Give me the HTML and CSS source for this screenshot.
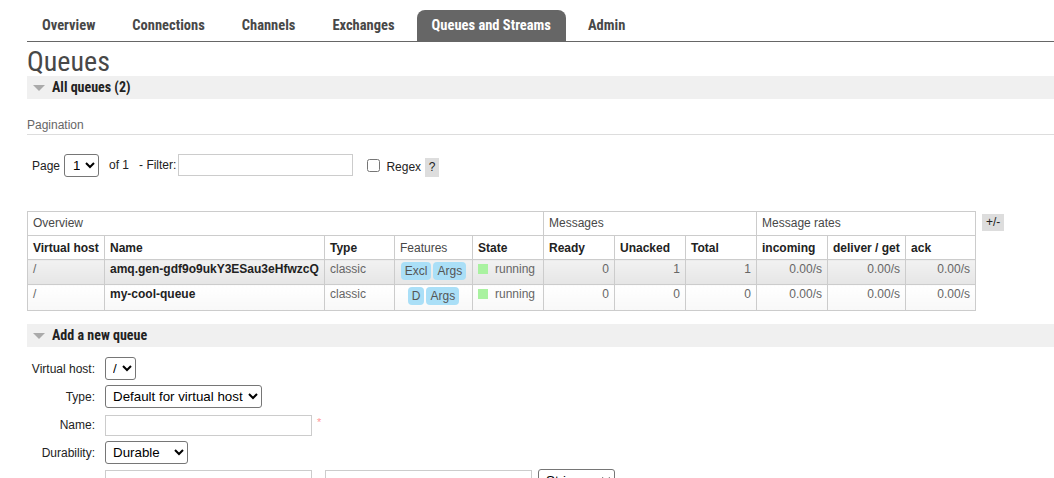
FILE: index.html
```html
<!DOCTYPE html>
<html>
<head>
<meta charset="utf-8">
<link rel="stylesheet" href="styles.css">
</head>
<body>
<div class="page">
  <ul class="tabs">
    <li class="tab">Overview</li>
    <li class="tab">Connections</li>
    <li class="tab">Channels</li>
    <li class="tab">Exchanges</li>
    <li class="tab active">Queues and Streams</li>
    <li class="tab">Admin</li>
  </ul>
  <h1 class="title">Queues</h1>
  <div class="bar"><span class="tri"></span>All queues (2)</div>

  <div class="pag-head">Pagination</div>
  <div class="pag-row">
    <span>Page</span>
    <select class="sel sel-page"><option>1</option></select>
    <span class="of">of 1</span>
    <span class="flt">- Filter:</span>
    <input class="txt filter" type="text">
    <input class="chk" type="checkbox">
    <span class="regex">Regex</span>
    <span class="help">?</span>
  </div>

  <div class="table-wrap">
    <table class="list">
      <colgroup>
        <col style="width:77px"><col style="width:220px"><col style="width:70px"><col style="width:78px"><col style="width:71px">
        <col style="width:71px"><col style="width:71px"><col style="width:71px">
        <col style="width:71px"><col style="width:78px"><col style="width:70px">
      </colgroup>
      <thead>
        <tr class="grp">
          <th colspan="5">Overview</th>
          <th colspan="3">Messages</th>
          <th colspan="3">Message rates</th>
        </tr>
        <tr class="hdr">
          <th>Virtual host</th><th>Name</th><th>Type</th><th class="plain">Features</th><th>State</th>
          <th>Ready</th><th>Unacked</th><th>Total</th>
          <th>incoming</th><th>deliver / get</th><th>ack</th>
        </tr>
      </thead>
      <tbody>
        <tr class="alt1">
          <td>/</td><td class="name">amq.gen-gdf9o9ukY3ESau3eHfwzcQ</td><td>classic</td>
          <td class="feat"><span class="badge">Excl</span><span class="badge">Args</span></td>
          <td><span class="green"></span>running</td>
          <td class="num">0</td><td class="num">1</td><td class="num">1</td>
          <td class="num">0.00/s</td><td class="num">0.00/s</td><td class="num">0.00/s</td>
        </tr>
        <tr class="alt2">
          <td>/</td><td class="name">my-cool-queue</td><td>classic</td>
          <td class="feat"><span class="badge">D</span><span class="badge">Args</span></td>
          <td><span class="green"></span>running</td>
          <td class="num">0</td><td class="num">0</td><td class="num">0</td>
          <td class="num">0.00/s</td><td class="num">0.00/s</td><td class="num">0.00/s</td>
        </tr>
      </tbody>
    </table>
    <span class="pm">+/-</span>
  </div>

  <div class="bar bar2"><span class="tri"></span>Add a new queue</div>

  <div class="form">
    <label>Virtual host:</label>
    <div><select class="sel sel-vh"><option>/</option></select></div>
    <label>Type:</label>
    <div><select class="sel sel-type"><option>Default for virtual host</option></select></div>
    <label>Name:</label>
    <div class="inl"><input class="txt w207" type="text"><span class="req">*</span></div>
    <label>Durability:</label>
    <div><select class="sel sel-dur"><option>Durable</option><option>Transient</option></select></div>
    <label></label>
    <div class="inl"><input class="txt w207" type="text"><span class="eq">=</span><input class="txt w207" type="text"><select class="sel sel-str"><option>String</option></select></div>
  </div>
</div>
</body>
</html>
```

FILE: styles.css
```css
html, body {
  margin: 0;
  padding: 0;
  background: #fff;
}
body {
  font-family: "Liberation Sans", Arial, sans-serif;
  font-size: 12px;
  color: #484848;
  overflow: hidden;
}
.page {
  margin-left: 27px;
}
.tabs {
  list-style: none;
  margin: 10px 0 0 0;
  padding: 0;
  display: flex;
  gap: 7px;
  border-bottom: 1px solid #666;
  height: 31px;
}
.tab {
  font-family: "Roboto Condensed", "Liberation Sans", sans-serif;
  font-weight: bold;
  font-size: 14.5px;
  line-height: 31px;
  padding: 0 15px;
  color: #484848;
  border-radius: 8px 8px 0 0;
}
.tab.active {
  background: #666;
  color: #fff;
}
.title {
  font-family: "Roboto Condensed", "Liberation Sans", sans-serif;
  font-weight: normal;
  font-size: 28px;
  line-height: 28px;
  margin: 6px 0 0 0;
  color: #484848;
}
.bar {
  background: #f0f0f0;
  height: 23px;
  line-height: 23px;
  display: flex;
  align-items: center;
  font-family: "Roboto Condensed", "Liberation Sans", sans-serif;
  font-weight: bold;
  font-size: 14px;
  color: #222;
}
.tri {
  width: 0;
  height: 0;
  border-left: 6px solid transparent;
  border-right: 6px solid transparent;
  border-top: 6px solid #aaa;
  margin: 1px 7px 0 6px;
}
.pag-head {
  margin-top: 19px;
  line-height: 14px;
  padding-bottom: 2px;
  border-bottom: 1px solid #ddd;
  color: #666;
}
.pag-row {
  display: flex;
  align-items: center;
  margin-top: 18px;
  padding-left: 5px;
  height: 24px;
  color: #222;
}
.pag-row > span:first-child {
  position: relative;
  top: 1px;
}
.sel {
  font-family: "Liberation Sans", Arial, sans-serif;
  font-size: 13.33px;
  height: 23px;
  color: #000;
  padding: 0 2px 0 4px;
  border: 1px solid #767676;
  border-radius: 3px;
  background: #fff;
}
.sel-page {
  margin-left: 4px;
  width: 35px;
}
.of {
  margin-left: 10px;
}
.flt {
  margin-left: 10px;
}
.txt {
  border: 1px solid #ccc;
  height: 22px;
  box-sizing: border-box;
  padding: 1px 3px;
  font-size: 12px;
}
.filter {
  width: 175px;
  margin-left: 2px;
}
.chk {
  width: 13px;
  height: 13px;
  margin: 0 0 0 14px;
}
.regex {
  margin-left: 6px;
  position: relative;
  top: 2px;
}
.help {
  margin-left: 4px;
  background: #ddd;
  width: 14px;
  height: 19px;
  line-height: 19px;
  text-align: center;
  position: relative;
  top: 2px;
}
.table-wrap {
  display: flex;
  align-items: flex-start;
  margin-top: 34px;
}
.list {
  border-collapse: collapse;
  table-layout: fixed;
  width: 948px;
}
.list th, .list td {
  border: 1px solid #ccc;
  padding: 0 5px;
  text-align: left;
  white-space: nowrap;
  overflow: hidden;
}
.grp th {
  font-weight: normal;
  height: 22px;
  color: #484848;
  padding-bottom: 1px;
}
.hdr th {
  height: 23px;
  font-weight: bold;
  color: #222;
}
.hdr th.plain {
  font-weight: normal;
  color: #484848;
}
.list td {
  vertical-align: top;
  padding-top: 2px;
  color: #666;
}
.alt1 td {
  height: 22px;
  background: linear-gradient(#f2f2f2, #e6e6e6);
}
.alt2 td {
  height: 23px;
  background: linear-gradient(#fff, #f8f8f8);
}
.list td.name {
  font-weight: bold;
  color: #222;
}
.list td.num {
  text-align: right;
}
.list td.feat {
  text-align: center;
  padding: 2px 2px 0 2px;
}
.badge {
  display: inline-block;
  background: #aadff7;
  border-radius: 4px;
  padding: 1px 4px 0 4px;
  line-height: 17px;
  margin: 0 1px;
  color: #555;
  font-size: 12px;
}
.green {
  display: inline-block;
  width: 10px;
  height: 10px;
  background: #a9f2a0;
  margin-right: 7px;
  vertical-align: -1px;
}
.pm {
  margin: 3px 0 0 6px;
  background: #ddd;
  width: 22px;
  height: 17px;
  line-height: 17px;
  text-align: center;
  color: #222;
}
.bar2 {
  margin-top: 13px;
}
.form {
  display: grid;
  grid-template-columns: 68px auto;
  grid-template-rows: 27px 29px 28px 27px 28px;
  column-gap: 10px;
  align-items: center;
  margin-top: 8px;
  color: #222;
}
.form label {
  text-align: right;
}
.inl {
  display: flex;
  align-items: center;
}
.sel-vh {
  padding-left: 3px;
}
.sel-type {
  padding-left: 3px;
}
.w207 {
  width: 207px;
  height: 21px;
}
.req {
  color: #f99;
  margin-left: 5px;
  font-size: 11px;
  position: relative;
  top: -3px;
}
.eq {
  margin: 0 2px 0 5px;
  width: 6px;
}
.sel-dur {
  width: 83px;
  padding-left: 3px;
}
.sel-str {
  margin-left: 6px;
  width: 77px;
  padding-left: 3px;
}
```
